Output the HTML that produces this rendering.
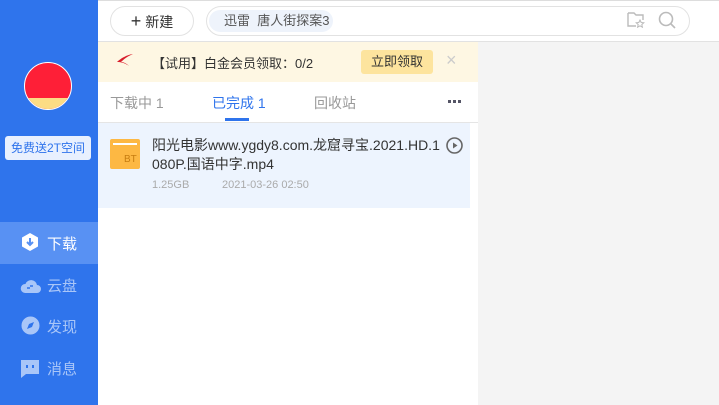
<html><head><style>
body{margin:0;width:719px;height:405px;position:relative;overflow:hidden;font-family:"Liberation Sans","Noto Sans CJK SC",sans-serif;background:#fff}
div{position:absolute;box-sizing:border-box}
</style></head><body>
<div style="left:0;top:0;width:98px;height:405px;background:#2f74ec"></div>
<div style="left:24px;top:62px;width:48px;height:48px;border-radius:50%;border:1px solid #fff;overflow:hidden;background:#fe1f37"><div style="left:0;top:35px;width:48px;height:14px;background:#fcdc84"></div></div>
<div style="left:5px;top:136px;width:86px;height:24px;background:#e8f0fe;border-radius:3px;color:#2f74ec;font-size:12px;line-height:24px;text-align:center;white-space:nowrap">免费送2T空间</div>
<div style="left:0;top:222px;width:98px;height:42px;background:#5891f3"></div>
<svg style="position:absolute;left:20px;top:232px" width="20" height="20" viewBox="0 0 20 20"><polygon points="10,1 18,5.5 18,14.5 10,19 2,14.5 2,5.5" fill="#fff"/><path d="M10 6v7M7 10l3 3 3-3" stroke="#5891f3" stroke-width="2" fill="none"/></svg>
<div style="left:47px;top:233px;color:#fff;font-size:15px">下载</div>
<svg style="position:absolute;left:20px;top:276px" width="21" height="18" viewBox="0 0 21 18"><path d="M5 17h12a4 4 0 0 0 0-8 6 6 0 0 0-11.5-1A4.5 4.5 0 0 0 5 17z" fill="#a9c6f8"/><path d="M7 12h3M10 10h3" stroke="#2f74ec" stroke-width="1.5"/></svg>
<div style="left:47px;top:275px;color:#a9c6f8;font-size:15px">云盘</div>
<svg style="position:absolute;left:21px;top:316px" width="19" height="19"><circle cx="9.5" cy="9.5" r="9" fill="#a9c6f8"/><path d="M6 13l2-5 5-2-2 5z" fill="#2f74ec"/></svg>
<div style="left:47px;top:316px;color:#a9c6f8;font-size:15px">发现</div>
<svg style="position:absolute;left:21px;top:360px" width="19" height="18"><path d="M0 0h18v14H5l-5 4z" fill="#a9c6f8"/><rect x="5" y="5" width="2" height="3" fill="#2f74ec"/><rect x="11" y="5" width="2" height="3" fill="#2f74ec"/></svg>
<div style="left:47px;top:358px;color:#a9c6f8;font-size:15px">消息</div>
<div style="left:98px;top:0;width:621px;height:1px;background:#ddd"></div>
<div style="left:98px;top:41px;width:621px;height:1px;background:#e2e2e2"></div>
<div style="left:110px;top:6px;width:84px;height:30px;border:1px solid #e2e2e2;border-radius:15px;font-size:14px;color:#333;line-height:28px;text-align:center"><b style="font-size:18px;font-weight:normal">+</b> 新建</div>
<div style="left:206px;top:6px;width:484px;height:30px;border:1px solid #e2e2e2;border-radius:15px"></div>
<div style="left:209px;top:10px;width:124px;height:22px;background:#eef3fb;border-radius:11px;font-size:13px;color:#555;line-height:22px;padding-left:15px;white-space:nowrap">迅雷&nbsp;&nbsp;唐人街探案3</div>
<svg style="position:absolute;left:627px;top:12px" width="18" height="16"><path d="M1 1h6l2 2h7v5M1 1v13h8" stroke="#bbb" stroke-width="1.4" fill="none"/><path d="M13 8l1.2 2.5 2.6.3-2 1.8.6 2.6-2.4-1.4-2.4 1.4.6-2.6-2-1.8 2.6-.3z" stroke="#bbb" fill="none"/></svg>
<svg style="position:absolute;left:658px;top:11px" width="18" height="18"><circle cx="8" cy="8" r="6.5" stroke="#bbb" stroke-width="1.6" fill="none"/><path d="M13 13l4 4" stroke="#bbb" stroke-width="1.6"/></svg>
<div style="left:478px;top:42px;width:241px;height:363px;background:#f4f4f4"></div>
<div style="left:98px;top:42px;width:380px;height:40px;background:#fef7e3"></div>
<svg style="position:absolute;left:116px;top:53px" width="18" height="14"><path d="M17 1C10 2 4 6 1 9c4 0 8 1 12 4-3-3-6-4-8-4 3-3 7-6 12-8z" fill="#d81e2c"/></svg>
<div style="left:152px;top:53px;font-size:13px;color:#333;white-space:nowrap">【试用】白金会员领取：0/2</div>
<div style="left:361px;top:50px;width:72px;height:24px;background:#fde49e;border-radius:3px;font-size:13px;color:#333;line-height:24px;text-align:center">立即领取</div>
<div style="left:446px;top:50px;font-size:18px;color:#ccc">×</div>
<div style="left:110px;top:93px;font-size:14px;color:#999">下载中 1</div>
<div style="left:212px;top:93px;font-size:14px;color:#2f74ec">已完成 1</div>
<div style="left:225px;top:118px;width:24px;height:3px;background:#2f74ec"></div>
<div style="left:314px;top:93px;font-size:14px;color:#999">回收站</div>
<div style="left:448px;top:100px;width:3px;height:3px;background:#556;box-shadow:5px 0 #556,10px 0 #556"></div>
<div style="left:98px;top:122px;width:380px;height:1px;background:#e5e5e5"></div>
<div style="left:98px;top:123px;width:372px;height:85px;background:#edf4fe"></div>
<div style="left:110px;top:139px;width:30px;height:30px;background:#fdb843;border-radius:2px"><div style="left:3px;top:4px;width:24px;height:2px;background:#fff"></div><div style="left:14px;top:15px;font-size:10px;color:#c77d10">BT</div></div>
<div style="left:152px;top:136px;width:292px;font-size:14px;color:#333;line-height:19px;word-break:break-all">阳光电影www.ygdy8.com.龙窟寻宝.2021.HD.1080P.国语中字.mp4</div>
<div style="left:152px;top:179px;font-size:11px;color:#aaa">1.25GB</div>
<div style="left:222px;top:179px;font-size:11px;color:#aaa">2021-03-26 02:50</div>
<svg style="position:absolute;left:446px;top:137px" width="17" height="17"><circle cx="8.5" cy="8.5" r="7.5" stroke="#666" stroke-width="1.6" fill="none"/><path d="M7 5.5v6l4.5-3z" fill="#666"/></svg>
</body></html>
